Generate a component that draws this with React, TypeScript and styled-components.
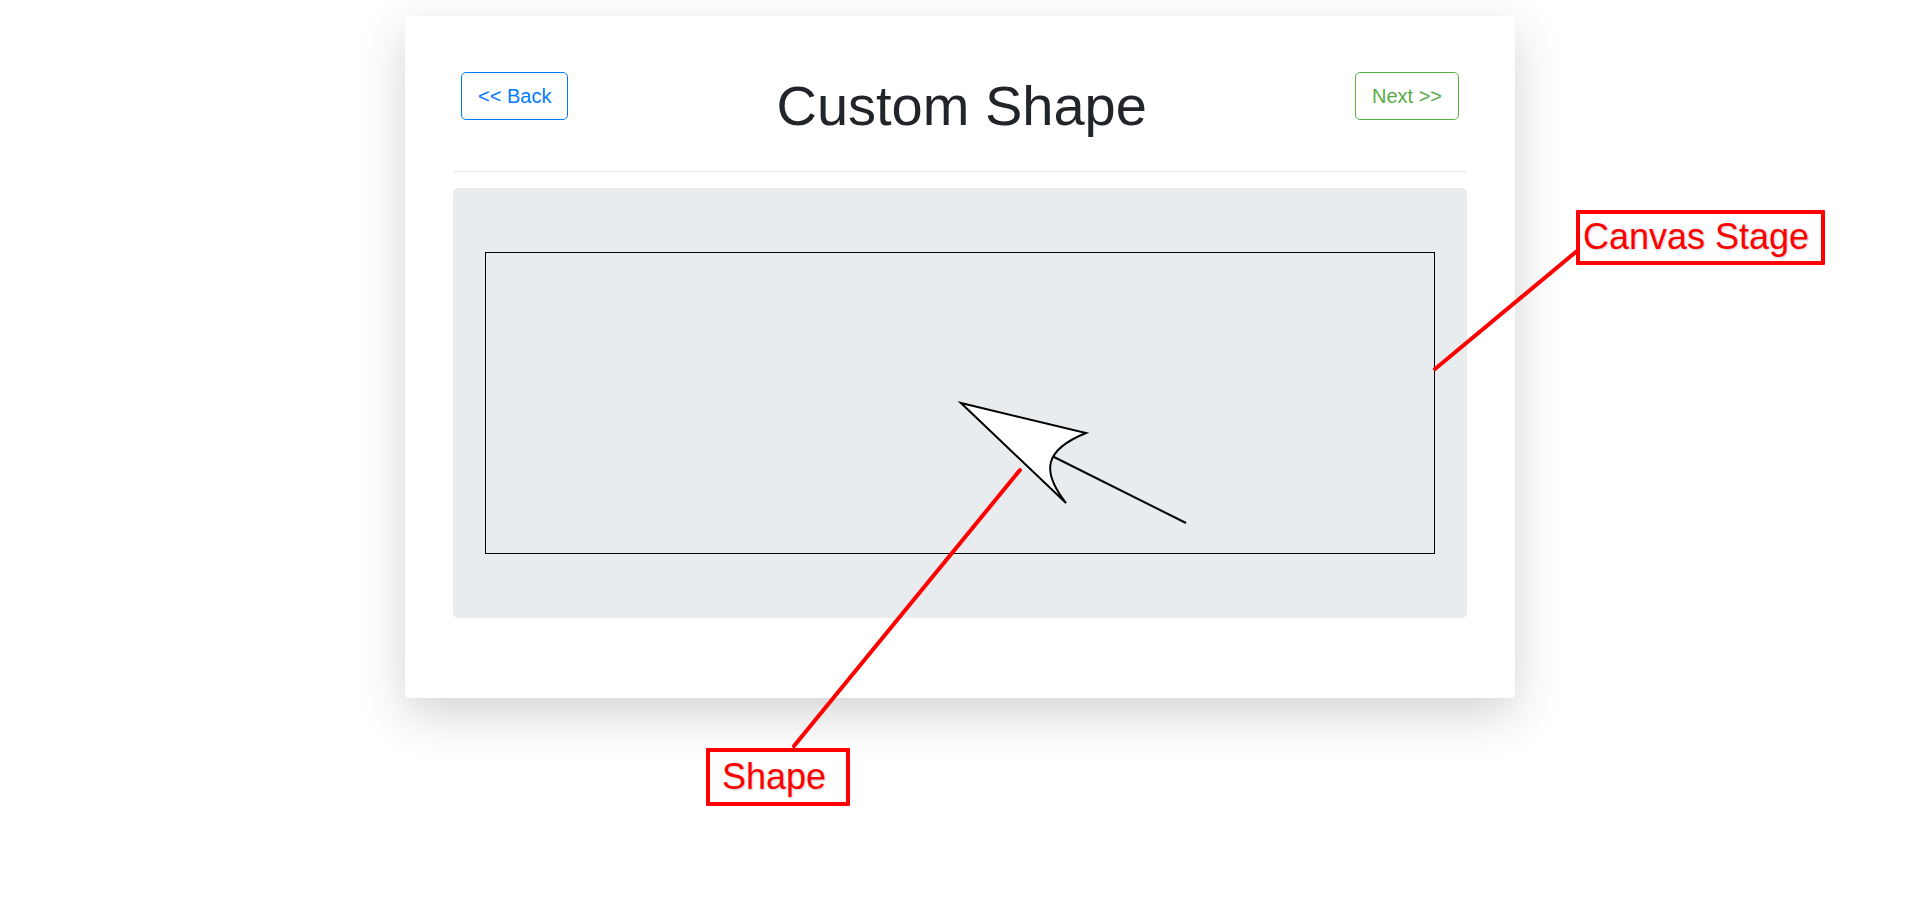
import React from "react";
import styled, { createGlobalStyle } from "styled-components";

const GlobalStyle = createGlobalStyle`
  *, *::before, *::after { box-sizing: border-box; }
  body {
    margin: 0;
    background: #fff;
    color: #212529;
    font-family: "Liberation Sans", Arial, sans-serif;
    font-size: 16px;
    line-height: 1.5;
  }
`;

const Page = styled.div`
  min-height: 100vh;
  padding: 16px 0 128px 15px;
`;

const Card = styled.main`
  position: relative;
  max-width: 1110px;
  margin: 0 auto;
  padding: 48px;
  background: #fff;
  border-radius: 4px;
  box-shadow: 0 16px 48px rgba(0, 0, 0, 0.175);
`;

const Header = styled.header`
  display: flex;
  justify-content: space-between;
  align-items: flex-start;
  padding: 8px 8px 16px;
`;

const Title = styled.h1`
  margin: 0;
  font-size: 56px;
  font-weight: 400;
  line-height: 67px;
`;

const NavButton = styled.button<{ $color: string }>`
  padding: 8px 16px;
  border: 1px solid ${(p) => p.$color};
  border-radius: 5px;
  background: transparent;
  color: ${(p) => p.$color};
  font-family: inherit;
  font-size: 20px;
  line-height: 30px;
  cursor: pointer;
`;

const Divider = styled.hr`
  margin: 16px 0;
  border: 0;
  border-top: 1px solid rgba(0, 0, 0, 0.1);
`;

const Panel = styled.section`
  margin-bottom: 32px;
  padding: 64px 32px;
  background: #e9ecef;
  border-radius: 5px;
`;

const Stage = styled.div`
  border: 1px solid #000;
`;

const Drawing = styled.svg`
  display: block;
  width: 100%;
  height: 300px;
`;

const Pointers = styled.svg`
  position: absolute;
  top: 0;
  left: 0;
  width: 100%;
  height: 100%;
  overflow: visible;
  pointer-events: none;
`;

const Callout = styled.div<{ $x: number; $y: number; $w: number; $pad: string }>`
  position: absolute;
  left: ${(p) => p.$x}px;
  top: ${(p) => p.$y}px;
  width: ${(p) => p.$w}px;
  padding: ${(p) => p.$pad};
  border: 4px solid #f00;
  border-radius: 1px;
  color: #f00;
  font-size: 36px;
  line-height: 45px;
  white-space: nowrap;
  text-shadow: 1px 1px 2px rgba(0, 0, 0, 0.2);
`;

export default function App() {
  return (
    <Page>
      <GlobalStyle />
      <Card>
        <Header>
          <NavButton type="button" $color="#007bff">&lt;&lt; Back</NavButton>
          <Title>Custom Shape</Title>
          <NavButton type="button" $color="#5aab46">Next &gt;&gt;</NavButton>
        </Header>
        <Divider />
        <Panel>
          <Stage>
            <Drawing viewBox="0 0 948 300" aria-hidden="true">
              <g stroke="#000" strokeWidth="2">
                <path d="M560 200L700 270" fill="none" />
                <path d="M475 150L600 180C558 197 555 218 580 250Z" fill="#fff" />
              </g>
            </Drawing>
          </Stage>
        </Panel>
        <Pointers aria-hidden="true">
          <g stroke="#f00" strokeWidth="4" strokeLinecap="round">
            <line x1="1030" y1="353" x2="1172" y2="235" />
            <line x1="615" y1="454" x2="389" y2="730" />
          </g>
        </Pointers>
        <Callout $x={1171} $y={194} $w={249} $pad="0 3px 2px">Canvas Stage</Callout>
        <Callout $x={301} $y={732} $w={144} $pad="2px 12px 3px">Shape</Callout>
      </Card>
    </Page>
  );
}
